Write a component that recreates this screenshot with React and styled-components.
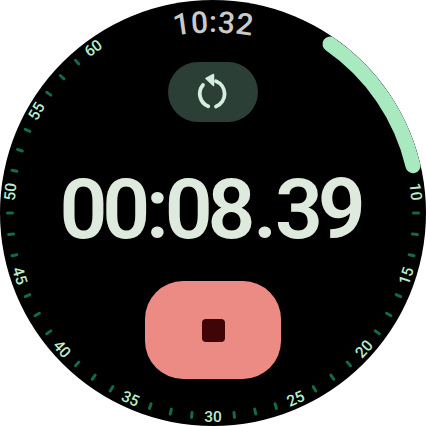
import React from 'react';
import styled, { createGlobalStyle } from 'styled-components';

const GlobalStyle = createGlobalStyle`
  html, body {
    margin: 0;
    background: #ffffff;
  }
`

const Watch = styled.div`
  position: relative;
  width: 426px;
  height: 426px;
  border-radius: 50%;
  background: #000000;
  overflow: hidden;
  display: flex;
  flex-direction: column;
  align-items: center;
  font-family: Roboto, "Liberation Sans", sans-serif;
`
const Clock = styled.div`
  display: flex;
  height: 30px;
  margin-top: 8px;
  font-size: 30px;
  font-weight: 500;
  line-height: 30px;
  color: #c9cbc9;
`
const ClockChar = styled.span`
  display: block;
  margin: 0 0.4px;
  transform: translateY(${(p) => p.$drop}px) rotate(${(p) => p.$tilt}deg);
`
const ResetButton = styled.div`
  width: 90px;
  height: 60px;
  margin-top: 24px;
  border-radius: 30px;
  background: #2c3f36;
  display: flex;
  align-items: center;
  justify-content: center;
`
const Elapsed = styled.div`
  display: flex;
  align-items: center;
  height: 84px;
  margin: 46px 6px 0 0;
  font-size: 84px;
  font-weight: 600;
  line-height: 84px;
  letter-spacing: -5.2px;
  color: #dfeadf;
`
const Separator = styled.span`
  display: block;
  margin: 0 ${(p) => p.$gap}px;
`
const StopButton = styled.div`
  width: 136px;
  height: 98px;
  margin-top: 29px;
  border-radius: 38px;
  background: #ec8b84;
  display: flex;
  align-items: center;
  justify-content: center;
`
const StopSquare = styled.div`
  width: 23px;
  height: 23px;
  border-radius: 4px;
  background: #3f0507;
`
const Dial = styled.svg`
  position: absolute;
  inset: 0;
  pointer-events: none;
`
const DialLabel = styled.text`
  font-family: Roboto, "Liberation Sans", sans-serif;
  font-size: 15.5px;
  font-weight: 500;
  fill: #b9eccb;
  text-anchor: middle;
  dominant-baseline: central;
`

const CENTER = 213
const ARC_RADIUS = 205.5
const LABELS = [10, 15, 20, 25, 30, 35, 40, 45, 50, 55, 60]

const polar = (radius, deg) => {
  const rad = (deg * Math.PI) / 180
  return [CENTER + radius * Math.sin(rad), CENTER - radius * Math.cos(rad)]
}

// seconds map to 4.8deg each, the scale starts 36deg past the top
const labelAngle = (sec) => 36 + sec * 4.8

const labelRotation = (deg) => {
  if (deg < 90) return deg
  if (deg < 270) return deg - 180
  return deg - 360
}

const ticks = []
for (let deg = 84; deg <= 324; deg += 6) {
  if ((deg - 84) % 24 !== 0) ticks.push(deg)
}

const arcStart = polar(ARC_RADIUS, 34.7)
const arcEnd = polar(ARC_RADIUS, 76.7)

const clockChars = [
  { c: '1', tilt: -8, drop: 1.5 },
  { c: '0', tilt: -4, drop: 0 },
  { c: ':', tilt: 0, drop: -1 },
  { c: '3', tilt: 4, drop: 0 },
  { c: '2', tilt: 8, drop: 1.5 },
]

const App = () => (
  <Watch>
    <GlobalStyle />
    <Clock>
      {clockChars.map(({ c, tilt, drop }) => (
        <ClockChar key={c} $tilt={tilt} $drop={drop}>{c}</ClockChar>
      ))}
    </Clock>
    <ResetButton>
      <svg width="36" height="38" viewBox="0 0 36 38" fill="none">
        <path
          d="M21 8.2A13.6 13.6 0 0 1 21 33.5M13.2 33.3A13.6 13.6 0 0 1 8 12"
          stroke="#d5eee0"
          strokeWidth="3.8"
          strokeLinecap="round"
        />
        <path d="M11 5.5L18.5 1.5V12.5Z" fill="#d5eee0" stroke="#d5eee0" strokeWidth="1.5" strokeLinejoin="round" />
      </svg>
    </ResetButton>
    <Elapsed>
      00<Separator $gap={1}>:</Separator>08<Separator $gap={3}>.</Separator>39
    </Elapsed>
    <StopButton>
      <StopSquare />
    </StopButton>
    <Dial width="426" height="426" viewBox="0 0 426 426">
      {ticks.map((deg) => {
        const [x1, y1] = polar(200.5, deg)
        const [x2, y2] = polar(205.5, deg)
        return <line key={deg} x1={x1} y1={y1} x2={x2} y2={y2} stroke="#12694b" strokeWidth="3" strokeLinecap="round" />
      })}
      {LABELS.map((sec) => {
        const deg = labelAngle(sec)
        const [x, y] = polar(203.5, deg)
        return (
          <DialLabel key={sec} x={x} y={y} transform={`rotate(${labelRotation(deg)} ${x} ${y})`}>
            {sec}
          </DialLabel>
        )
      })}
      <path
        d={`M${arcStart[0]} ${arcStart[1]}A${ARC_RADIUS} ${ARC_RADIUS} 0 0 1 ${arcEnd[0]} ${arcEnd[1]}`}
        fill="none"
        stroke="#a8e9bf"
        strokeWidth="15"
        strokeLinecap="round"
      />
    </Dial>
  </Watch>
)

export default App
